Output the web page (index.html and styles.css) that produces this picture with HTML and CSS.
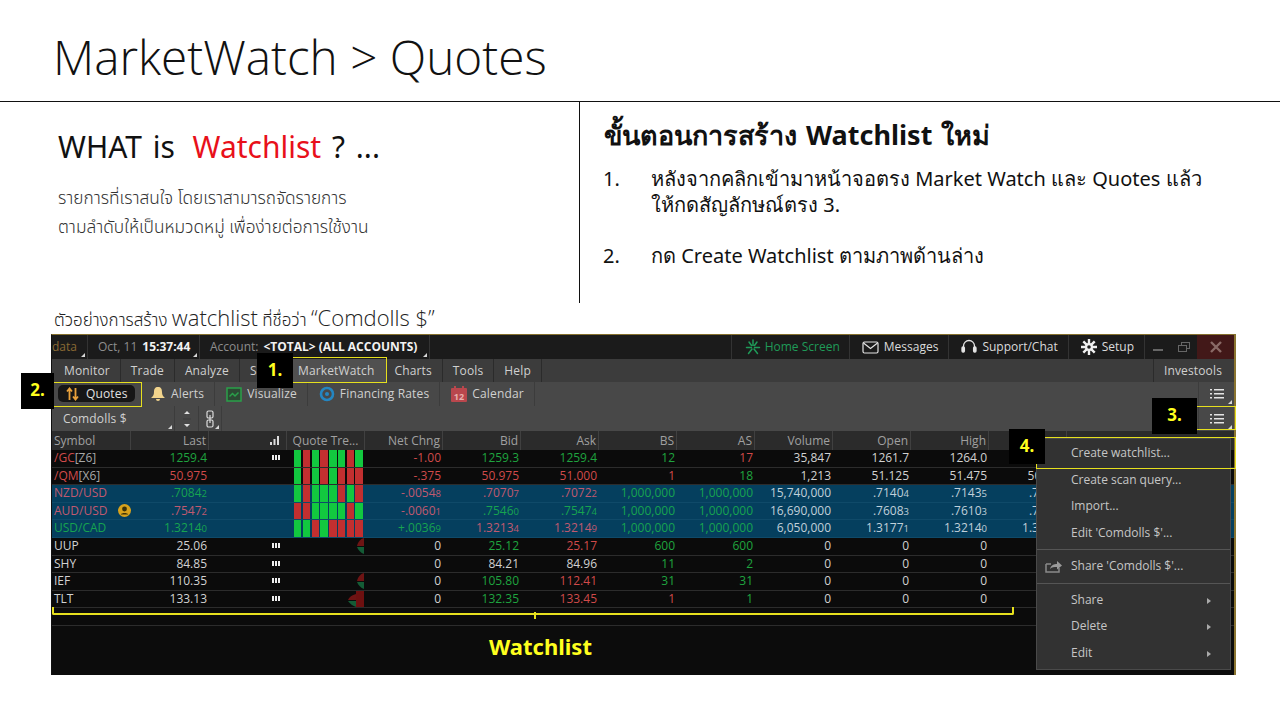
FILE: index.html
```html
<!DOCTYPE html>
<html lang="en">
<head>
  <meta charset="UTF-8" />
  <meta name="viewport" content="width=device-width, initial-scale=1.0"/>
  <title>MarketWatch &gt; Quotes</title>
  <link rel="stylesheet" href="styles.css">
</head>
<body>
  <header class="slide-head">
    <h1>MarketWatch &gt; Quotes</h1>
  </header>

  <section class="intro">
    <div class="intro-left">
      <h2>WHAT is <span class="red">Watchlist</span> ? ...</h2>
      <p>รายการที่เราสนใจ โดยเราสามารถจัดรายการ<br>ตามลำดับให้เป็นหมวดหมู่ เพื่อง่ายต่อการใช้งาน</p>
    </div>
    <div class="intro-right">
      <h3>ขั้นตอนการสร้าง Watchlist ใหม่</h3>
      <ol class="steps">
        <li><span>1.</span><div>หลังจากคลิกเข้ามาหน้าจอตรง Market Watch และ Quotes แล้ว<br>ให้กดสัญลักษณ์ตรง 3.</div></li>
        <li><span>2.</span><div>กด Create Watchlist ตามภาพด้านล่าง</div></li>
      </ol>
    </div>
  </section>

  <p class="caption">ตัวอย่างการสร้าง <span class="big">watchlist</span> ที่ชื่อว่า <span class="big">“Comdolls $”</span></p>

  <div class="platform">
    <!-- top status bar -->
    <div class="titlebar">
      <div class="tb-item tb-data corner">data</div>
      <div class="tb-item tb-date corner"><span>Oct, 11</span><b>15:37:44</b></div>
      <div class="tb-item tb-account corner"><span>Account:</span><b>&lt;TOTAL&gt; (ALL ACCOUNTS)</b></div>
      <div class="tb-right">
        <div class="tb-item green">
          <svg width="16" height="16" viewBox="0 0 16 16" stroke="#1f9a58" stroke-width="1.5" stroke-linecap="round"><path d="M8 6.5V1M6.5 8.5H1.5M9.5 8.5h5M7 10l-3.5 4.5M9 10l3.5 4.500M6.500 6.500L4 3M9.500 6.500L12 3"/></svg>
          <span>Home Screen</span>
        </div>
        <div class="tb-item">
          <svg width="17" height="13" viewBox="0 0 17 13" fill="none" stroke="#e4e4e4" stroke-width="1.2"><rect x="1" y="1" width="15" height="11" rx="1.5"/><path d="M1.5 2l7 5.5 7-5.5"/></svg>
          <span>Messages</span>
        </div>
        <div class="tb-item">
          <svg width="16" height="16" viewBox="0 0 16 16" fill="none" stroke="#e4e4e4" stroke-width="1.3"><path d="M2.5 10V7a5.5 5.5 0 0 1 11 0v3"/><rect x="1" y="8" width="2.4" height="5" rx="1" fill="#e4e4e4"/><rect x="12.6" y="8" width="2.4" height="5" rx="1" fill="#e4e4e4"/></svg>
          <span>Support/Chat</span>
        </div>
        <div class="tb-item">
          <svg width="16" height="16" viewBox="0 0 16 16" stroke="#f0f0f0" stroke-width="2.4"><path d="M8 0v16M0 8h16M2.3 2.3l11.4 11.4M13.7 2.3L2.3 13.7"/><circle cx="8" cy="8" r="4" fill="#f0f0f0" stroke="none"/><circle cx="8" cy="8" r="1.8" fill="#1b1b1b" stroke="none"/></svg>
          <span>Setup</span>
        </div>
        <div class="win-btns">
          <span class="win-btn">
            <svg width="10" height="10" viewBox="0 0 10 10" fill="#666"><rect x="0" y="7" width="10" height="2"/></svg>
          </span>
          <span class="win-btn">
            <svg width="14" height="12" viewBox="0 0 14 12" fill="none" stroke="#666"><rect x="4.5" y="1.5" width="8" height="6"/><rect x="1.5" y="4.5" width="8" height="6" fill="#1b1b1b"/></svg>
          </span>
          <span class="win-btn win-close">
            <svg width="12" height="12" viewBox="0 0 12 12" stroke="#8a6a66" stroke-width="2.4"><path d="M1 1l10 10M11 1L1 11"/></svg>
          </span>
        </div>
      </div>
    </div>

    <!-- main menu -->
    <nav class="menubar">
      <a>Monitor</a><a>Trade</a><a>Analyze</a><a class="scan">S</a><a class="on">MarketWatch</a><a>Charts</a><a>Tools</a><a>Help</a>
      <a class="push">Investools</a>
    </nav>

    <!-- sub menu -->
    <nav class="subbar">
      <a class="pill">
        <svg width="13" height="14" viewBox="0 0 13 14" fill="none" stroke-width="1.8"><path d="M3.5 13V2M1 4.5l2.5-3 2.5 3" stroke="#e9a13b"/><path d="M9.5 1v11M7 9.5l2.5 3 2.5-3" stroke="#e9a13b"/></svg>
        <span>Quotes</span>
      </a>
      <a class="sub">
        <svg width="16" height="16" viewBox="0 0 16 16" fill="#f2d48c"><path d="M8 1c-3 0-4 2-4 5 0 3-1 4-3 6h14c-2-2-3-3-3-6 0-3-1-5-4-5z"/><path d="M6 13h4a2 2 0 0 1-4 0z"/></svg>
        <span>Alerts</span>
      </a>
      <a class="sub">
        <svg width="16" height="15" viewBox="0 0 16 15" fill="none" stroke="#2aa04a" stroke-width="1.5"><rect x="1" y="1" width="14" height="13" fill="#2c4a33"/><path d="M3.5 9.5l3-3 2.5 2.5 3.5-3.5"/></svg>
        <span>Visualize</span>
      </a>
      <a class="sub">
        <svg width="16" height="16" viewBox="0 0 16 16" fill="none"><circle cx="8" cy="8" r="6" stroke="#2486c2" stroke-width="2.6"/><circle cx="8" cy="8" r="2" fill="#2486c2"/></svg>
        <span>Financing Rates</span>
      </a>
      <a class="sub">
        <svg width="16" height="16" viewBox="0 0 16 16"><rect x="0" y="2" width="16" height="14" rx="1" fill="#b9474d"/><path d="M4 0v4M12 0v4" stroke="#b9474d" stroke-width="2"/><text x="8" y="13.5" font-size="9" font-weight="700" text-anchor="middle" fill="#e8b0ae" font-family="Open Sans">12</text></svg>
        <span>Calendar</span>
      </a>
      <span class="list-ico push corner">
        <svg width="14" height="12" viewBox="0 0 14 12" fill="#e4e4e4"><path d="M0 1h2v1.6H0zM4 1h10v1.6H4zM0 5h2v1.6H0zM4 5h10v1.6H4zM0 9h2v1.6H0zM4 9h10v1.6H4z"/></svg>
      </span>
    </nav>

    <!-- watchlist selector -->
    <div class="wlbar">
      <div class="wl-name corner">Comdolls $</div>
      <div class="wl-spin">
        <svg width="8" height="20" viewBox="0 0 8 20" fill="#e0e0e0"><path d="M4 2l3 3H1zM4 18l-3-3h6z"/><path d="M0 9.5h8v1H0z" fill="#3c3c3c"/></svg>
      </div>
      <div class="wl-link corner">
        <svg width="10" height="18" viewBox="0 0 10 18" fill="none" stroke="#ddd" stroke-width="1.2"><rect x="2" y="1" width="6" height="7" rx="1.5"/><rect x="2" y="10" width="6" height="7" rx="1.5"/><path d="M5 5v8"/></svg>
      </div>
      <span class="list-ico push corner">
        <svg width="14" height="12" viewBox="0 0 14 12" fill="#e4e4e4"><path d="M0 1h2v1.6H0zM4 1h10v1.6H4zM0 5h2v1.6H0zM4 5h10v1.6H4zM0 9h2v1.6H0zM4 9h10v1.6H4z"/></svg>
      </span>
    </div>

    <!-- quotes table -->
    <div class="row head">
      <div class="left">Symbol</div><div>Last</div>
      <div class="bars-cell"><svg width="9" height="9" viewBox="0 0 9 9" fill="#ddd"><path d="M0 6h2v3H0zM3.5 3h2v6h-2zM7 0h2v9H7z"/></svg></div>
      <div class="center">Quote Tre...</div><div>Net Chng</div><div>Bid</div><div>Ask</div><div>BS</div><div>AS</div><div>Volume</div><div>Open</div><div>High</div><div></div>
    </div>

    <div class="row">
      <div class="left"><span class="dn">/GC</span><span class="mut">[Z6]</span></div><div class="up">1259.4</div>
      <div class="bars-cell"><i class="bars"></i></div>
      <div class="trend"><i class="g"></i><i class="r"></i><i class="g"></i><i class="r"></i><i class="g"></i><i class="g"></i><i class="r"></i><i class="g"></i></div>
      <div class="dn">-1.00</div><div class="up">1259.3</div><div class="up">1259.4</div><div class="up">12</div><div class="dn">17</div><div>35,847</div><div>1261.7</div><div>1264.0</div><div></div>
    </div>
    <div class="row">
      <div class="left"><span class="dn">/QM</span><span class="mut">[X6]</span></div><div class="dn">50.975</div>
      <div></div>
      <div class="trend"><i class="g"></i><i class="r"></i><i class="g"></i><i class="r"></i><i class="g"></i><i class="r"></i><i class="r"></i><i class="r"></i></div>
      <div class="dn">-.375</div><div class="dn">50.975</div><div class="dn">51.000</div><div class="dn">1</div><div class="up">18</div><div>1,213</div><div>51.125</div><div>51.475</div><div>50.975</div>
    </div>
    <div class="row fx">
      <div class="left dn">NZD/USD</div><div class="up">.7084<small>2</small></div>
      <div></div>
      <div class="trend"><i class="g"></i><i class="r"></i><i class="g"></i><i class="g"></i><i class="g"></i><i class="r"></i><i class="g"></i><i class="r"></i></div>
      <div class="dn">-.0054<small>8</small></div><div class="dn">.7070<small>7</small></div><div class="dn">.7072<small>2</small></div><div class="up">1,000,000</div><div class="up">1,000,000</div><div>15,740,000</div><div>.7140<small>4</small></div><div>.7143<small>5</small></div><div>.7070<small>7</small></div>
    </div>
    <div class="row fx">
      <div class="left dn">AUD/USD
        <svg class="badge" width="13" height="13" viewBox="0 0 13 13"><circle cx="6.5" cy="6.5" r="6.5" fill="#d8a21c"/><circle cx="6.5" cy="5" r="2.4" fill="#3c3208"/><path d="M2.8 10.5c.6-2 6.8-2 7.4 0z" fill="#3c3208"/></svg>
      </div><div class="dn">.7547<small>2</small></div>
      <div></div>
      <div class="trend"><i class="r"></i><i class="r"></i><i class="g"></i><i class="g"></i><i class="g"></i><i class="g"></i><i class="r"></i><i class="g"></i></div>
      <div class="dn">-.0060<small>1</small></div><div class="up">.7546<small>0</small></div><div class="up">.7547<small>4</small></div><div class="up">1,000,000</div><div class="up">1,000,000</div><div>16,690,000</div><div>.7608<small>3</small></div><div>.7610<small>3</small></div><div>.7546<small>0</small></div>
    </div>
    <div class="row fx">
      <div class="left up">USD/CAD</div><div class="up">1.3214<small>0</small></div>
      <div></div>
      <div class="trend"><i class="g"></i><i class="g"></i><i class="r"></i><i class="g"></i><i class="r"></i><i class="r"></i><i class="r"></i><i class="r"></i></div>
      <div class="up">+.0036<small>9</small></div><div class="dn">1.3213<small>4</small></div><div class="dn">1.3214<small>9</small></div><div class="up">1,000,000</div><div class="up">1,000,000</div><div>6,050,000</div><div>1.3177<small>1</small></div><div>1.3214<small>0</small></div><div>1.3177<small>1</small></div>
    </div>
    <div class="row">
      <div class="left">UUP</div><div>25.06</div>
      <div class="bars-cell"><i class="bars"></i></div>
      <div class="trend tick">
        <svg width="7" height="17" viewBox="0 0 7 17"><path d="M7 0v8H0C1 4 3 1 7 0z" fill="#6e1414"/><path d="M0 9h7v7C4 15 1 12 0 9z" fill="#145c36"/></svg>
      </div>
      <div>0</div><div class="up">25.12</div><div class="dn">25.17</div><div class="up">600</div><div class="up">600</div><div>0</div><div>0</div><div>0</div><div></div>
    </div>
    <div class="row">
      <div class="left">SHY</div><div>84.85</div>
      <div class="bars-cell"><i class="bars"></i></div>
      <div></div>
      <div>0</div><div>84.21</div><div>84.96</div><div class="up">11</div><div class="up">2</div><div>0</div><div>0</div><div>0</div><div></div>
    </div>
    <div class="row">
      <div class="left">IEF</div><div>110.35</div>
      <div class="bars-cell"><i class="bars"></i></div>
      <div class="trend tick">
        <svg width="7" height="17" viewBox="0 0 7 17"><path d="M7 0v8H0C1 4 3 1 7 0z" fill="#6e1414"/><path d="M0 9h7v7C4 15 1 12 0 9z" fill="#145c36"/></svg>
      </div>
      <div>0</div><div class="up">105.80</div><div class="dn">112.41</div><div class="up">31</div><div class="up">31</div><div>0</div><div>0</div><div>0</div><div></div>
    </div>
    <div class="row">
      <div class="left">TLT</div><div>133.13</div>
      <div class="bars-cell"><i class="bars"></i></div>
      <div class="trend tick">
        <svg width="16" height="17" viewBox="0 0 16 17"><path d="M8 3v6H0C1 6 4 4 8 3z" fill="#6e1414"/><path d="M0 10h8v6C5 15 2 13 0 10z" fill="#145c36"/><rect x="8" y="0" width="8" height="17" fill="#6e1010"/></svg>
      </div>
      <div>0</div><div class="up">132.35</div><div class="dn">133.45</div><div class="dn">1</div><div class="up">1</div><div>0</div><div>0</div><div>0</div><div></div>
    </div>
    <div class="row"></div>

    <!-- right click menu -->
    <div class="ctx">
      <div class="ctx-item">Create watchlist...</div>
      <div class="ctx-item">Create scan query...</div>
      <div class="ctx-item">Import...</div>
      <div class="ctx-item">Edit 'Comdolls $'...</div>
      <div class="ctx-sep"></div>
      <div class="ctx-item share">
        <svg width="17" height="14" viewBox="0 0 17 14" fill="none"><path d="M1 5h5M1 5v8h13V9" stroke="#8a8a8a" stroke-width="1.5"/><path d="M5 10c1-4 4-5 7-5V2l5 4.5-5 4V8c-3 0-5 0-7 2z" fill="#9a9a9a"/></svg>
        Share 'Comdolls $'...
      </div>
      <div class="ctx-sep"></div>
      <div class="ctx-item more">Share<i></i></div>
      <div class="ctx-item more">Delete<i></i></div>
      <div class="ctx-item more">Edit<i></i></div>
    </div>

    <!-- annotations drawn on top of the screenshot -->
    <div class="mark mark-mw"></div>
    <div class="mark mark-quotes"></div>
    <div class="mark mark-list"></div>
    <div class="mark mark-create"></div>
    <div class="num num1">1.</div>
    <div class="num num2">2.</div>
    <div class="num num3">3.</div>
    <div class="num num4">4.</div>
    <div class="bracket"><i></i></div>
    <div class="bracket-label">Watchlist</div>
  </div>
</body>
</html>
```

FILE: styles.css
```css
html, body {
  margin: 0;
  padding: 0;
  background: #fff;
  height: 100%;
  overflow: hidden;
  font-family: "Open Sans", "Noto Sans", "Noto Sans Thai", sans-serif;
}

/* slide part */
.slide-head {
  height: 101px;
  box-sizing: border-box;
  padding: 25px 0 0 53px;
}

.slide-head h1 {
  margin: 0;
  font-size: 47.7px;
  line-height: 64px;
  font-weight: 300;
  color: #111;
}

.intro {
  display: grid;
  grid-template-columns: 580px 1fr;
  height: 201px;
  border-top: 1px solid #111;
}

.intro-left {
  padding: 24px 0 0 58px;
  border-right: 1px solid #111;
}

.intro-left h2 {
  margin: 0;
  font-family: "Noto Sans", sans-serif;
  font-size: 30px;
  line-height: 42px;
  font-weight: 400;
  word-spacing: 3px;
  color: #111;
}

.red {
  margin-left: 7px;
  color: #e8101a;
}

.intro-left p {
  margin: 15px 0 0;
  font-size: 17.3px;
  line-height: 29px;
  font-weight: 300;
  color: #333;
}

.intro-right { padding: 15px 0 0 24px; }

.intro-right h3 {
  margin: 0;
  font-family: "Noto Sans", sans-serif;
  font-size: 27px;
  line-height: 36px;
  font-weight: 700;
  word-spacing: 2px;
  color: #111;
}

.steps {
  list-style: none;
  margin: 13px 0 0 -1px;
  padding: 0;
  font-family: "Noto Sans", sans-serif;
  font-size: 20px;
  line-height: 26px;
  color: #111;
}

.steps li {
  display: flex;
  margin-bottom: 25px;
}

.steps li span { width: 48px; }

.caption {
  margin: 0;
  height: 31px;
  padding-left: 54px;
  font-size: 17px;
  line-height: 29px;
  font-weight: 300;
  color: #222;
}

.caption .big { font-size: 22px; }

/* trading window */
.platform {
  position: relative;
  margin-left: 51px;
  width: 1185px;
  height: 341px;
  box-sizing: border-box;
  border-top: 1px solid #85702e;
  border-left: 1px solid #111;
  border-right: 2px solid #8a7430;
  background: #0c0c0c;
  font-size: 12px;
  color: #d8d8d8;
}

/* small white triangle in a corner of a dropdown */
.corner { position: relative; }

.corner::after {
  content: "";
  position: absolute;
  right: 2px;
  bottom: 2px;
  border-left: 4px solid transparent;
  border-bottom: 4px solid #d8d8d8;
}

.titlebar {
  display: flex;
  align-items: stretch;
  height: 24px;
  background: #1b1b1b;
  line-height: 24px;
}

.tb-item {
  display: flex;
  align-items: center;
  gap: 5px;
  padding: 0 10px;
  box-sizing: border-box;
  border-right: 1px solid #333;
  white-space: nowrap;
}

.tb-data { width: 36px; padding: 0; color: #8a6a34; }
.tb-date { width: 112px; color: #8d8d8d; }
.tb-account { width: 230px; color: #8d8d8d; }
.tb-item b { color: #f2f2f2; font-weight: 700; }

.tb-right {
  margin-left: auto;
  display: flex;
  align-items: stretch;
}

.tb-right .tb-item { padding: 0 10px 0 12px; color: #dcdcdc; }

.tb-right .green {
  padding: 0 9px 0 13px;
  color: #1f9a58;
  border-left: 1px solid #333;
  gap: 4px;
}

.win-btns { display: flex; }

.win-btn {
  width: 26px;
  display: flex;
  align-items: center;
  justify-content: center;
}

.win-close { width: 37px; background: #421818; }

.menubar, .subbar, .wlbar {
  display: flex;
  align-items: stretch;
  color: #d0d0d0;
  letter-spacing: .15px;
}

.menubar {
  height: 23px;
  background: #3c3c3c;
  padding-left: 2px;
  line-height: 23px;
}

.menubar a {
  padding: 0 10px;
  border-right: 1px solid #2b2b2b;
}

.menubar .scan { width: 48px; box-sizing: border-box; }

.menubar .on {
  padding-right: 12px;
  margin-right: -3px;
  background: #505050;
}

.menubar .push {
  margin-left: auto;
  border-right: 0;
  border-left: 1px solid #2b2b2b;
  padding-right: 12px;
}

.subbar {
  height: 24px;
  background: #484848;
  line-height: 24px;
  padding-left: 6px;
}

.pill {
  display: flex;
  align-items: center;
  gap: 7px;
  height: 17px;
  width: 77px;
  box-sizing: border-box;
  margin: 3px 4px 0 0;
  padding-left: 8px;
  background: #161616;
  border-radius: 5px;
  color: #e0e0e0;
}

.sub {
  display: flex;
  align-items: center;
  gap: 5px;
  padding: 0 10px 0 11px;
  border-right: 1px solid #3c3c3c;
}

.list-ico {
  display: flex;
  align-items: center;
  justify-content: center;
  width: 35px;
  border-left: 1px solid #3c3c3c;
}

.push { margin-left: auto; }

.wlbar {
  height: 25px;
  background: #484848;
  line-height: 25px;
}

.wl-name {
  width: 123px;
  padding-left: 11px;
  box-sizing: border-box;
  border-right: 1px solid #3c3c3c;
}

.wl-spin, .wl-link {
  display: flex;
  align-items: center;
  justify-content: center;
  border-right: 1px solid #3c3c3c;
}

.wl-spin { width: 23px; }
.wl-link { width: 22px; }

/* quotes grid */
.row {
  display: grid;
  grid-template-columns: 79px repeat(12, 78px) 1fr;
  height: 17.6px;
  box-sizing: border-box;
  border-bottom: 1px solid #2c2c2c;
  background: #0b0b0b;
  line-height: 16.6px;
  color: #d2d2d2;
}

.row > div {
  text-align: right;
  padding-right: 2px;
  white-space: nowrap;
  overflow: hidden;
}

.row > .left { text-align: left; padding-left: 2px; }
.row > .center { text-align: center; padding: 0; }

.row.head {
  height: 19px;
  line-height: 19px;
  background: #2b2b2b;
  border-bottom: 0;
  color: #a0a0a0;
}

.row.head > div { border-right: 1px solid #404040; box-sizing: border-box; }

.row.fx { background: #053f5e; border-bottom-color: #0f4a69; color: #c0d0da; }
.row.fx .dn { color: #c05a70; }
.row.fx .up { color: #17a350; }

.up { color: #1fa43f; }
.dn { color: #cf4a4a; }
.mut { color: #a8a8a8; }

small { font-size: 9.5px; }

.badge { vertical-align: -2px; margin-left: 7px; }

.row > .bars-cell { padding-right: 7px; }

.bars {
  display: inline-block;
  width: 8px;
  height: 5px;
  margin-top: 5px;
  vertical-align: top;
  background: repeating-linear-gradient(90deg, #eee 0 2px, transparent 2px 3px);
}

.row > .trend {
  display: flex;
  gap: 1.4px;
  padding: 0 0 0 7px;
}

.trend i { width: 7.4px; height: 100%; }
.trend .g { background: #12c83f; }
.trend .r { background: #c22f30; }

.row > .trend.tick {
  justify-content: flex-end;
  padding: 0 1px 0 0;
}

/* context menu */
.ctx {
  position: absolute;
  left: 984px;
  top: 103px;
  width: 195px;
  height: 232px;
  box-sizing: border-box;
  padding-top: 1px;
  background: #323232;
  border: 1px solid #4a4a4a;
  color: #c6c6c6;
}

.ctx-item {
  position: relative;
  height: 26.5px;
  line-height: 26.5px;
  padding-left: 34px;
}

.ctx-sep {
  height: 1px;
  margin: 3px 0;
  background: #555;
}

.ctx-item.share svg {
  position: absolute;
  left: 8px;
  top: 6px;
}

.more i {
  position: absolute;
  right: 19px;
  top: 11px;
  border-left: 4px solid #aaa;
  border-top: 3px solid transparent;
  border-bottom: 3px solid transparent;
}

/* yellow annotations */
.mark {
  position: absolute;
  box-sizing: border-box;
  border: 1px solid #e6e01e;
}

.mark-mw { left: 241px; top: 22px; width: 94px; height: 26px; border-left: 0; }
.mark-quotes { left: 2px; top: 47px; width: 88px; height: 25px; border-left: 0; }
.mark-list { left: 1145px; top: 71px; width: 39px; height: 24px; border-left: 0; }
.mark-create { left: 984px; top: 102px; width: 200px; height: 32px; }

.num {
  position: absolute;
  display: flex;
  align-items: center;
  justify-content: center;
  box-sizing: border-box;
  padding-bottom: 3px;
  background: #000;
  color: #ffff1e;
  font-family: "Noto Sans", sans-serif;
  font-weight: 700;
  font-size: 17px;
}

.num1 { left: 205px; top: 18px; width: 36px; height: 35px; }
.num2 { left: -31px; top: 38px; width: 33px; height: 36px; }
.num3 { left: 1100px; top: 63px; width: 45px; height: 36px; }
.num4 { left: 957px; top: 94px; width: 36px; height: 35px; }

.bracket {
  position: absolute;
  left: 0;
  top: 272px;
  width: 962px;
  height: 8px;
  box-sizing: border-box;
  border: 2px solid #e6e01e;
  border-top: 0;
  border-radius: 0 0 2px 2px;
}

.bracket i {
  position: absolute;
  left: 480px;
  top: 5px;
  width: 2px;
  height: 7px;
  background: #e6e01e;
}

.bracket-label {
  position: absolute;
  left: 437px;
  top: 293px;
  color: #ffff1e;
  font-family: "Noto Sans", sans-serif;
  font-weight: 700;
  font-size: 22px;
  line-height: 36px;
}
```
